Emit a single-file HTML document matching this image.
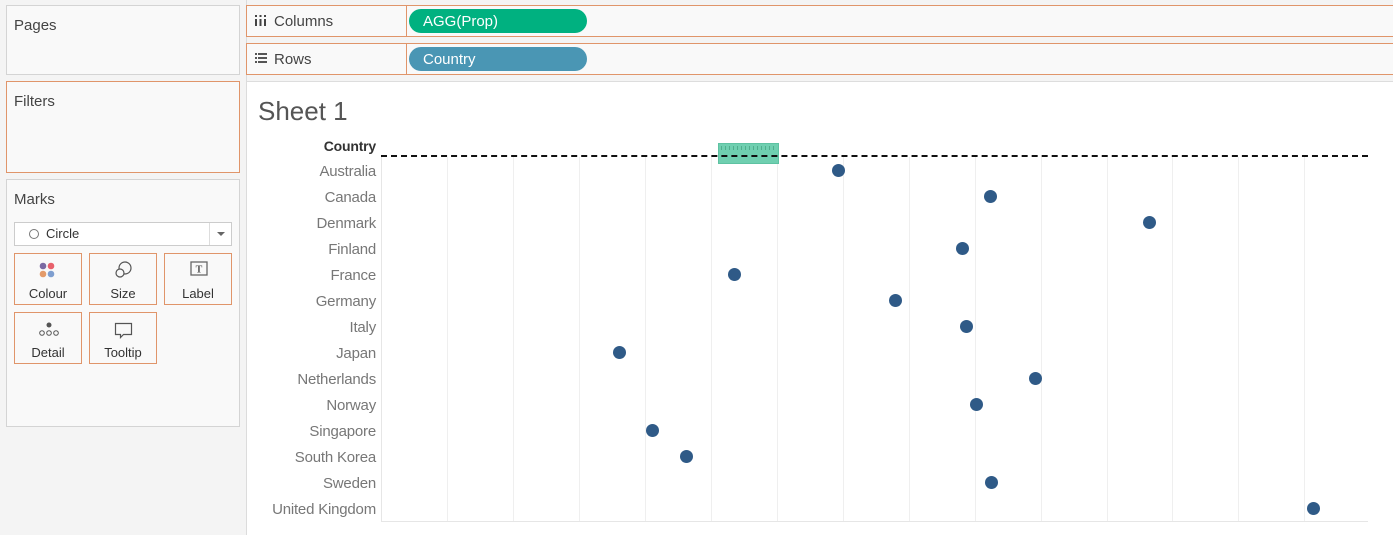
<!DOCTYPE html>
<html><head><style>
body{margin:0;width:1393px;height:535px;background:#f4f4f4;font-family:"Liberation Sans",sans-serif;position:relative;overflow:hidden;color:#333}
.a{position:absolute;box-sizing:border-box}
.box{background:#f9f9f9;border:1px solid #d4d4d4}
.ob{border:1px solid #e0956a}
.t{font-size:15px;color:#444}
.card{background:#f9f9f9;border:1px solid #e0956a;width:68px;height:52px;text-align:center;font-size:13px;color:#333}
.card span{position:absolute;left:0;right:0;bottom:3px}
.pill{border-radius:12px;color:#fff;font-size:15px;padding-left:14px;line-height:26px;height:24px}
.lbl{position:absolute;right:1017px;color:#777;text-align:right;white-space:nowrap;font-family:"Liberation Sans",sans-serif;font-size:15px;letter-spacing:-0.2px}
.g{position:absolute;top:157px;height:364px;width:1px;background:#efefef}
.d{position:absolute;width:13px;height:13px;border-radius:50%;background:#2f5a87}
</style></head><body>
<div class="a box" style="left:6px;top:5px;width:234px;height:70px"><div class="a t" style="left:7px;top:11px">Pages</div></div>
<div class="a box ob" style="left:6px;top:81px;width:234px;height:92px"><div class="a t" style="left:7px;top:11px">Filters</div></div>
<div class="a box" style="left:6px;top:179px;width:234px;height:248px">
<div class="a t" style="left:7px;top:11px">Marks</div>
<div class="a" style="left:7px;top:42px;width:218px;height:24px;background:#fff;border:1px solid #ccc;font-size:13px;line-height:22px;color:#333">
<span style="display:inline-block;width:8px;height:8px;border:1px solid #777;border-radius:50%;margin:0 7px 0 14px;vertical-align:-1px"></span>Circle
<div class="a" style="right:0;top:0;width:22px;height:22px;border-left:1px solid #ddd"><div class="a" style="left:7px;top:9px;border:4px solid transparent;border-top:4px solid #666;border-bottom:0"></div></div></div>
<div class="a card" style="left:7px;top:73px"><svg class="a" style="left:24px;top:8px" width="18" height="18"><circle cx="4" cy="4" r="3.3" fill="#7b6aa3"/><circle cx="12" cy="4" r="3.3" fill="#e8616c"/><circle cx="4" cy="12" r="3.3" fill="#e49b6a"/><circle cx="12" cy="12" r="3.3" fill="#7f9fd0"/></svg><span>Colour</span></div>
<div class="a card" style="left:82px;top:73px"><svg class="a" style="left:24px;top:6px" width="20" height="20" fill="none" stroke="#555" stroke-width="1.2"><circle cx="11" cy="8" r="6"/><circle cx="6" cy="13" r="4" fill="#f9f9f9"/></svg><span>Size</span></div>
<div class="a card" style="left:157px;top:73px"><svg class="a" style="left:25px;top:7px" width="18" height="16"><rect x="1" y="1" width="16" height="13" fill="none" stroke="#666" stroke-width="1.3"/><text x="9" y="11.5" font-size="10" font-family="Liberation Serif" text-anchor="middle" fill="#555" font-weight="bold">T</text></svg><span>Label</span></div>
<div class="a card" style="left:7px;top:132px"><svg class="a" style="left:23px;top:8px" width="22" height="16" fill="none" stroke="#555"><circle cx="11" cy="4" r="2.5" fill="#555" stroke="none"/><circle cx="4" cy="12" r="2.3"/><circle cx="11" cy="12" r="2.3"/><circle cx="18" cy="12" r="2.3"/></svg><span>Detail</span></div>
<div class="a card" style="left:82px;top:132px"><svg class="a" style="left:24px;top:9px" width="20" height="18" fill="none" stroke="#555" stroke-width="1.2"><path d="M1.5 1.5h16v11h-8l-3 3v-3h-5z"/></svg><span>Tooltip</span></div>
</div>
<div class="a" style="left:246px;top:0;width:1px;height:535px;background:#dcdcdc"></div>
<div class="a ob" style="left:246px;top:5px;width:1160px;height:32px;background:#f9f9f9">
<svg class="a" style="left:8px;top:9px" width="12" height="11" fill="#444"><rect x="0" y="0" width="2" height="2"/><rect x="0" y="4" width="2" height="7"/><rect x="4.5" y="0" width="2" height="2"/><rect x="4.5" y="4" width="2" height="7"/><rect x="9" y="0" width="2" height="2"/><rect x="9" y="4" width="2" height="7"/></svg>
<div class="a t" style="left:27px;top:7px">Columns</div>
<div class="a" style="left:159px;top:0;width:1px;height:30px;background:#e0956a"></div>
<div class="a pill" style="left:162px;top:3px;width:178px;background:#00b180">AGG(Prop)</div></div>
<div class="a ob" style="left:246px;top:43px;width:1160px;height:32px;background:#f9f9f9">
<svg class="a" style="left:8px;top:9px" width="12" height="11" fill="#555"><rect x="0" y="0" width="2" height="2"/><rect x="3" y="0" width="9" height="2"/><rect x="0" y="4" width="2" height="2"/><rect x="3" y="4" width="9" height="2"/><rect x="0" y="8" width="2" height="2"/><rect x="3" y="8" width="9" height="2"/></svg>
<div class="a t" style="left:27px;top:7px">Rows</div>
<div class="a" style="left:159px;top:0;width:1px;height:30px;background:#e0956a"></div>
<div class="a pill" style="left:162px;top:3px;width:178px;background:#4a96b4">Country</div></div>
<div class="a" style="left:247px;top:81px;width:1146px;height:454px;background:#fff;border-top:1px solid #ddd"></div>
<div class="a" style="left:258px;top:96px;font-size:26px;color:#555;font-family:'Liberation Sans',sans-serif">Sheet 1</div>
<div class="lbl" style="top:138px;color:#333;font-weight:bold;font-size:14px">Country</div>
<div class="g" style="left:381px;background:#e6e6e6"></div>
<div class="g" style="left:447px"></div><div class="g" style="left:513px"></div><div class="g" style="left:579px"></div><div class="g" style="left:645px"></div><div class="g" style="left:711px"></div><div class="g" style="left:777px"></div><div class="g" style="left:843px"></div><div class="g" style="left:909px"></div><div class="g" style="left:975px"></div><div class="g" style="left:1041px"></div><div class="g" style="left:1107px"></div><div class="g" style="left:1172px"></div><div class="g" style="left:1238px"></div><div class="g" style="left:1304px"></div>
<div class="a" style="left:381px;top:521px;width:987px;height:1px;background:#e6e6e6"></div>
<div class="a" style="left:718px;top:143px;width:61px;height:21px;background:#6fcfb0;border:1px solid #5ec2a2"><div class="a" style="left:2px;top:2px;right:2px;height:4px;background:repeating-linear-gradient(90deg,#4fae8d 0 1px,transparent 1px 4px)"></div></div>
<div class="a" style="left:381px;top:155px;width:987px;height:0;border-top:2px dashed #111"></div>
<div class="lbl" style="top:163px">Australia</div>
<div class="lbl" style="top:189px">Canada</div>
<div class="lbl" style="top:215px">Denmark</div>
<div class="lbl" style="top:241px">Finland</div>
<div class="lbl" style="top:267px">France</div>
<div class="lbl" style="top:293px">Germany</div>
<div class="lbl" style="top:319px">Italy</div>
<div class="lbl" style="top:345px">Japan</div>
<div class="lbl" style="top:371px">Netherlands</div>
<div class="lbl" style="top:397px">Norway</div>
<div class="lbl" style="top:423px">Singapore</div>
<div class="lbl" style="top:449px">South Korea</div>
<div class="lbl" style="top:475px">Sweden</div>
<div class="lbl" style="top:501px">United Kingdom</div>
<div class="d" style="left:832px;top:164px"></div>
<div class="d" style="left:984px;top:190px"></div>
<div class="d" style="left:1143px;top:216px"></div>
<div class="d" style="left:956px;top:242px"></div>
<div class="d" style="left:728px;top:268px"></div>
<div class="d" style="left:889px;top:294px"></div>
<div class="d" style="left:960px;top:320px"></div>
<div class="d" style="left:613px;top:346px"></div>
<div class="d" style="left:1029px;top:372px"></div>
<div class="d" style="left:970px;top:398px"></div>
<div class="d" style="left:646px;top:424px"></div>
<div class="d" style="left:680px;top:450px"></div>
<div class="d" style="left:985px;top:476px"></div>
<div class="d" style="left:1307px;top:502px"></div>
</body></html>
